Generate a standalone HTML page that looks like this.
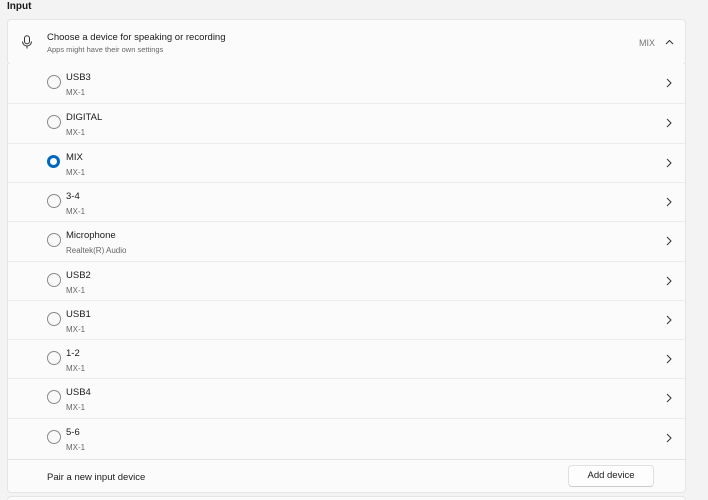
<!DOCTYPE html>
<html style="overflow:hidden;height:500px"><head><style>
body{margin:0;width:708px;height:500px;background:#f3f3f3;font-family:"Liberation Sans",sans-serif;position:relative;overflow:hidden;color:#1b1b1b}
.t{position:absolute;left:7px;top:1px;font-size:10px;font-weight:bold}
.card{position:absolute;left:7px;width:679px;background:#fbfbfb;border:1px solid #e5e5e5;border-radius:4px;box-sizing:border-box}
.hdr{top:19px;height:46px}
.row{position:absolute;left:0;width:679px;height:39.3px;border-top:1px solid #ebebeb;box-sizing:border-box}
.r{position:absolute;left:39px;top:11px;width:12px;height:12px;border:1px solid #8a8a8a;border-radius:50%;background:#f9f9f9}
.r.on{border:3.5px solid #0067c0;width:7px;height:7px;background:#fff}
.n{position:absolute;left:58px;top:8px;font-size:9.5px}
.s{position:absolute;left:58px;top:24px;font-size:8px;color:#666}
.ch{position:absolute;left:658px;top:14px}
</style></head><body>
<div class="t">Input</div>
<div class="card hdr">
<svg style="position:absolute;left:13px;top:15px" width="12" height="14" viewBox="0 0 12 14"><rect x="3.5" y="0.7" width="5" height="8" rx="2.5" fill="none" stroke="#333" stroke-width="1"/><path d="M1.5 6.5a4.5 4.5 0 0 0 9 0M6 11v2.5" fill="none" stroke="#333" stroke-width="1"/></svg>
<div style="position:absolute;left:39px;top:12px;font-size:9.5px">Choose a device for speaking or recording</div>
<div style="position:absolute;left:39px;top:25px;font-size:7.5px;color:#666">Apps might have their own settings</div>
<div style="position:absolute;left:631px;top:18px;font-size:9px;color:#777">MIX</div>
<svg style="position:absolute;left:657px;top:19px" width="9" height="6" viewBox="0 0 9 6"><path d="M1 5L4.5 1.5L8 5" fill="none" stroke="#333" stroke-width="1"/></svg>
</div>
<div class="card" style="top:64px;height:396px;border-radius:0;border-top:none">
<div class="row" style="top:0;border-top:none"><div class="r"></div><div class="n">USB3</div><div class="s">MX-1</div><svg class="ch" width="6" height="10"><path d="M1 1L5 5L1 9" fill="none" stroke="#333"/></svg></div>
<div class="row" style="top:39.3px"><div class="r"></div><div class="n">DIGITAL</div><div class="s">MX-1</div><svg class="ch" width="6" height="10"><path d="M1 1L5 5L1 9" fill="none" stroke="#333"/></svg></div>
<div class="row" style="top:78.6px"><div class="r on"></div><div class="n">MIX</div><div class="s">MX-1</div><svg class="ch" width="6" height="10"><path d="M1 1L5 5L1 9" fill="none" stroke="#333"/></svg></div>
<div class="row" style="top:117.9px"><div class="r"></div><div class="n">3-4</div><div class="s">MX-1</div><svg class="ch" width="6" height="10"><path d="M1 1L5 5L1 9" fill="none" stroke="#333"/></svg></div>
<div class="row" style="top:157.2px"><div class="r"></div><div class="n">Microphone</div><div class="s">Realtek(R) Audio</div><svg class="ch" width="6" height="10"><path d="M1 1L5 5L1 9" fill="none" stroke="#333"/></svg></div>
<div class="row" style="top:196.5px"><div class="r"></div><div class="n">USB2</div><div class="s">MX-1</div><svg class="ch" width="6" height="10"><path d="M1 1L5 5L1 9" fill="none" stroke="#333"/></svg></div>
<div class="row" style="top:235.8px"><div class="r"></div><div class="n">USB1</div><div class="s">MX-1</div><svg class="ch" width="6" height="10"><path d="M1 1L5 5L1 9" fill="none" stroke="#333"/></svg></div>
<div class="row" style="top:275.1px"><div class="r"></div><div class="n">1-2</div><div class="s">MX-1</div><svg class="ch" width="6" height="10"><path d="M1 1L5 5L1 9" fill="none" stroke="#333"/></svg></div>
<div class="row" style="top:314.4px"><div class="r"></div><div class="n">USB4</div><div class="s">MX-1</div><svg class="ch" width="6" height="10"><path d="M1 1L5 5L1 9" fill="none" stroke="#333"/></svg></div>
<div class="row" style="top:353.7px"><div class="r"></div><div class="n">5-6</div><div class="s">MX-1</div><svg class="ch" width="6" height="10"><path d="M1 1L5 5L1 9" fill="none" stroke="#333"/></svg></div>
</div>
<div class="card" style="top:459px;height:34px;border-radius:0 0 4px 4px">
<div style="position:absolute;left:39px;top:12px;font-size:9.5px">Pair a new input device</div>
<div style="position:absolute;left:560px;top:5px;width:86px;height:22px;background:#fdfdfd;border:1px solid #e0e0e0;border-bottom-color:#ccc;border-radius:4px;box-sizing:border-box;font-size:9.5px;text-align:center;line-height:20px">Add device</div>
</div>
<div class="card" style="top:496px;height:4px;border-bottom:none;border-radius:4px 4px 0 0"></div>
</body></html>
